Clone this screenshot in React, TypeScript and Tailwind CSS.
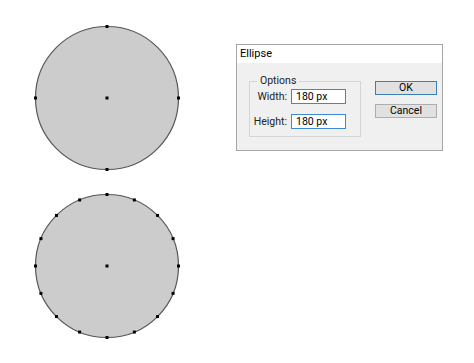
import React from "react";

const FONT = { fontFamily: "Roboto, 'Noto Sans', Arial, sans-serif" };

// anchor points around the ellipse, evenly spread
function Circle({ points }: { points: number }) {
  const cx = 75;
  const cy = 75;
  const r = 71.5;
  const dots = Array.from({ length: points }, (_, i) => {
    const a = (i / points) * Math.PI * 2;
    return [cx + r * Math.sin(a), cy - r * Math.cos(a)];
  });
  return (
    <svg width="150" height="150" viewBox="0 0 150 150">
      <circle cx={cx} cy={cy} r={r} fill="#cccccc" stroke="#555555" strokeWidth="1.2" />
      {dots.map(([x, y], i) => (
        <rect key={i} x={x - 1.5} y={y - 1.5} width="3" height="3" fill="#000" />
      ))}
      <rect x={cx - 1.5} y={cy - 1.5} width="3" height="3" fill="#000" />
    </svg>
  );
}

function Field({ label, value, focused }: { label: string; value: string; focused?: boolean }) {
  return (
    <div className="flex items-center">
      <span className="w-[41px] pr-[4px] text-right text-[10.5px] text-[#222]">{label}</span>
      <div
        className={
          focused
            ? "flex h-[15px] w-[55px] items-center border border-[#3c8ad4] bg-white pl-[4px] text-[10.5px] text-black"
            : "flex h-[15px] w-[55px] items-center border border-[#7a7a7a] bg-white pl-[4px] text-[10.5px] text-black"
        }
      >
        {value}
      </div>
    </div>
  );
}

export default function App() {
  return (
    <div className="flex h-[363px] w-[474px] bg-white" style={FONT}>
      <div className="flex flex-col gap-[18px] pl-[32px] pt-[23px]">
        <Circle points={4} />
        <Circle points={16} />
      </div>

      <div className="ml-[54px] mt-[44px] flex h-[107px] w-[207px] flex-col border border-[#a6a6a6] bg-[#f0f0f0]">
        <div className="flex h-[18px] items-center bg-white pl-[3px] text-[11px] text-black">Ellipse</div>
        <div className="flex pl-[12px] pt-[18px]">
          <fieldset className="relative h-[56px] w-[112px] border border-[#d5d5d5]">
            <span className="absolute left-[7px] top-[-7px] bg-[#f0f0f0] px-[3px] text-[10.5px] leading-[12px] text-[#222]">
              Options
            </span>
            <div className="flex flex-col gap-[9px] pt-[7px]">
              <Field label="Width:" value="180 px" />
              <Field label="Height:" value="180 px" focused />
            </div>
          </fieldset>
          <div className="ml-[14px] flex flex-col gap-[9px]">
            <button className="flex h-[14px] w-[62px] items-center justify-center border border-[#3c7fb1] bg-[#e1e1e1] text-[10.5px] text-black">
              OK
            </button>
            <button className="flex h-[14px] w-[62px] items-center justify-center border border-[#adadad] bg-[#e1e1e1] text-[10.5px] text-black">
              Cancel
            </button>
          </div>
        </div>
      </div>
    </div>
  );
}
